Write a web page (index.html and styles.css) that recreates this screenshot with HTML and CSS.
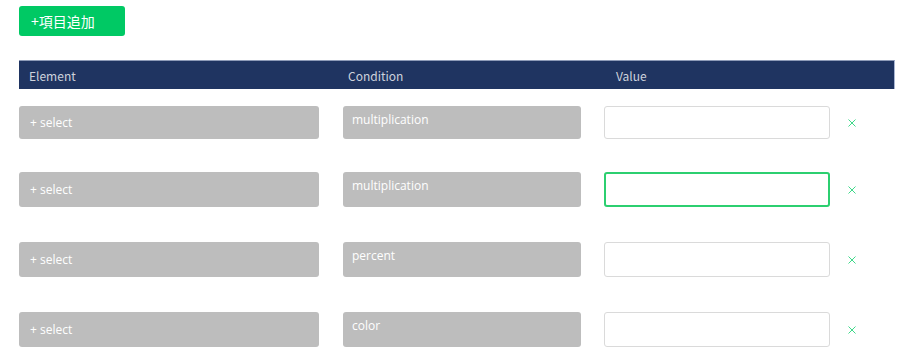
FILE: index.html
```html
<!DOCTYPE html>
<html lang="ja">
<head>
<meta charset="utf-8">
<title>Conditions</title>
<link rel="stylesheet" href="styles.css">
</head>
<body>
<div class="page">
  <button class="add-btn">+項目追加</button>
  <div class="table-head">
    <div class="th th-element">Element</div>
    <div class="th th-condition">Condition</div>
    <div class="th th-value">Value</div>
  </div>
  <div class="rows">
    <div class="row row-first">
      <div class="sel">+ select</div>
      <div class="cond">multiplication</div>
      <div class="val"></div>
      <span class="del"><svg width="8" height="8" viewBox="0 0 8 8"><path d="M0.5 0.5 L7.5 7.5 M7.5 0.5 L0.5 7.5" stroke="#3fd98a" stroke-width="1" fill="none"/></svg></span>
    </div>
    <div class="row">
      <div class="sel">+ select</div>
      <div class="cond">multiplication</div>
      <div class="val val-focus"></div>
      <span class="del"><svg width="8" height="8" viewBox="0 0 8 8"><path d="M0.5 0.5 L7.5 7.5 M7.5 0.5 L0.5 7.5" stroke="#3fd98a" stroke-width="1" fill="none"/></svg></span>
    </div>
    <div class="row">
      <div class="sel">+ select</div>
      <div class="cond">percent</div>
      <div class="val"></div>
      <span class="del"><svg width="8" height="8" viewBox="0 0 8 8"><path d="M0.5 0.5 L7.5 7.5 M7.5 0.5 L0.5 7.5" stroke="#3fd98a" stroke-width="1" fill="none"/></svg></span>
    </div>
    <div class="row">
      <div class="sel">+ select</div>
      <div class="cond">color</div>
      <div class="val"></div>
      <span class="del"><svg width="8" height="8" viewBox="0 0 8 8"><path d="M0.5 0.5 L7.5 7.5 M7.5 0.5 L0.5 7.5" stroke="#3fd98a" stroke-width="1" fill="none"/></svg></span>
    </div>
  </div>
</div>
</body>
</html>
```
FILE: styles.css
```css
html, body {
  margin: 0;
  padding: 0;
  background: #ffffff;
}
.page {
  padding: 6px 5px 0 19px;
  font-family: "Noto Sans CJK JP", "Noto Sans", sans-serif;
}
.add-btn {
  display: block;
  width: 106px;
  height: 30px;
  border: none;
  border-radius: 3px;
  background: #00c964;
  color: #ffffff;
  font-family: "Noto Sans CJK JP", sans-serif;
  font-size: 14px;
  text-align: left;
  padding: 0 0 0 12px;
  line-height: 30px;
}
.table-head {
  margin-top: 24px;
  height: 29px;
  background: #1f3461;
  border-top: 1px solid #8e9bb8;
  border-right: 1px solid #a8b5d2;
  box-sizing: border-box;
  display: flex;
  align-items: center;
  color: #cdd2dc;
  font-size: 12px;
}
.th-element { width: 319px; padding-left: 10px; box-sizing: border-box; }
.th-condition { width: 268px; padding-left: 10px; box-sizing: border-box; }
.th-value { padding-left: 10px; }
.rows {
  margin-top: 17px;
  display: flex;
  flex-direction: column;
  gap: 35px;
}
.row {
  display: flex;
  align-items: stretch;
  height: 35px;
}
.row-first {
  height: 33px;
  margin-bottom: -2px;
}
.sel, .cond {
  background: #bdbdbd;
  border-radius: 3px;
  color: #ffffff;
  font-family: "Open Sans", sans-serif;
  font-size: 12px;
  box-sizing: border-box;
}
.sel {
  width: 300px;
  display: flex;
  align-items: center;
  padding-left: 11px;
}
.cond {
  width: 238px;
  margin-left: 24px;
  padding: 5px 9px;
  line-height: 18px;
}
.val {
  width: 226px;
  margin-left: 23px;
  border: 1.5px solid #dadada;
  border-radius: 3px;
  box-sizing: border-box;
  background: #fff;
}
.val-focus {
  border: 2px solid #2ccf70;
}
.del {
  display: flex;
  align-items: center;
  margin-left: 18px;
}
.del svg { display: block; }
```
